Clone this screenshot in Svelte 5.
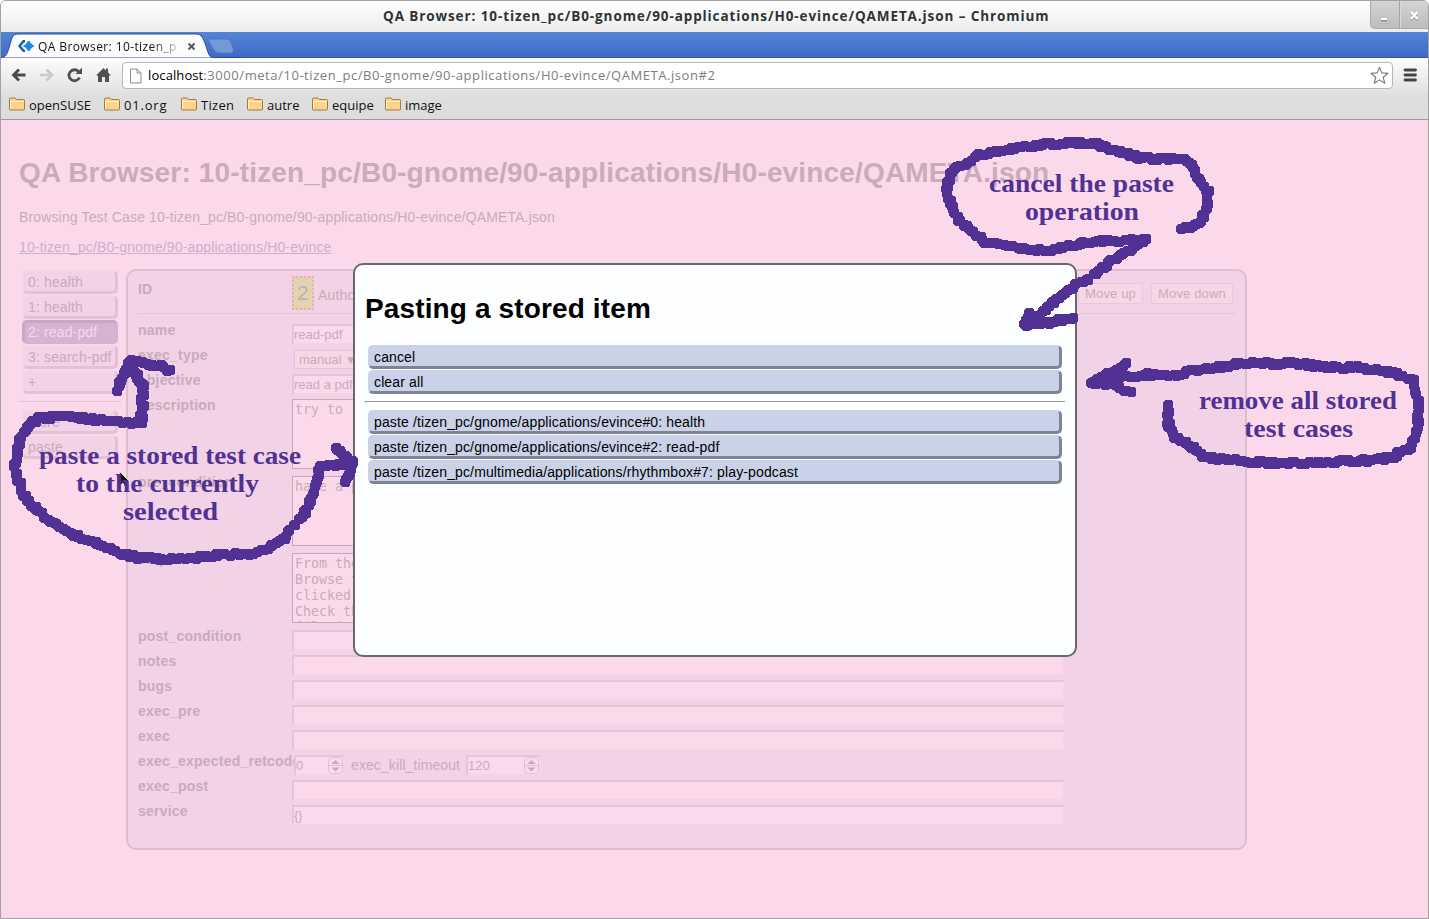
<script>
  const path = '10-tizen_pc/B0-gnome/90-applications/H0-evince';
  const bookmarks = [
    ['openSUSE', 95, 0], ['01.org', 77, 0.8], ['Tizen', 66, 0.3], ['autre', 65, 0], ['equipe', 73, 0], ['image', 70, 0]
  ];
  const tests = ['0: health', '1: health', '2: read-pdf', '3: search-pdf', '+'];
  const textareas = [
    ['description', 'try to'],
    ['pre_condition', 'have a pdf file'],
    ['steps', 'From the file browser\nBrowse to a pdf file\nclicked on the file\nCheck that the pdf\nfile is opened']
  ];
  const plain = ['post_condition', 'notes', 'bugs', 'exec_pre', 'exec'];
  const stored = [
    'paste /tizen_pc/gnome/applications/evince#0: health',
    'paste /tizen_pc/gnome/applications/evince#2: read-pdf',
    'paste /tizen_pc/multimedia/applications/rhythmbox#7: play-podcast'
  ];

  const strokes = [
    [[119,390],[120,381],[124,372],[131,360],[147,365],[160,366],[170,371]],
    [[131,361],[133,373],[143,387],[142,407],[141,424],[130,424],[115,420],[95,420],[75,417],[62,416],[38,418],[27,427],[20,440],[16,455],[15,465],[18,480],[24,495],[34,508],[50,521],[72,534],[95,543],[115,552],[133,557],[160,559],[188,559],[215,555],[250,555],[270,546],[285,539],[293,526],[305,512],[310,500],[316,480],[322,465],[335,465],[352,462]],
    [[127,370],[139,375]],
    [[335,448],[345,456],[353,462],[348,475],[344,482]],
    [[1180,230],[1195,225],[1203,217],[1207,203],[1207,192],[1198,178],[1192,165],[1183,158],[1160,159],[1137,158],[1120,152],[1100,145],[1073,143],[1043,145],[1010,148],[980,155],[960,165],[950,175],[947,190],[952,208],[963,225],[985,242],[1017,247],[1037,251],[1060,249],[1080,243],[1110,241],[1145,240],[1123,254],[1103,267],[1087,280],[1070,288],[1053,302],[1037,317],[1027,325],[1028,314]],
    [[1025,323],[1036,323],[1048,323],[1074,317]],
    [[1125,362],[1117,370],[1092,383],[1107,383],[1117,387],[1130,392]],
    [[1094,383],[1117,377],[1147,375],[1173,376],[1197,369],[1220,367],[1237,364],[1290,363],[1327,367],[1360,368],[1393,372],[1413,382],[1419,400],[1417,430],[1410,447],[1393,457],[1360,461],[1317,463],[1270,463],[1227,460],[1203,457],[1193,447],[1175,437],[1168,423],[1167,405]]
  ];

  // Stamps a slightly wobbling octagonal nib along each stroke.
  let seed = 7;
  const rnd = () => (seed = (seed * 16807) % 2147483647) / 2147483647 - 0.5;
  function brush(points) {
    let d = '';
    for (let i = 1; i < points.length; i++) {
      const [x0, y0] = points[i - 1];
      const [x1, y1] = points[i];
      const n = Math.max(1, Math.round(Math.hypot(x1 - x0, y1 - y0) / 3.5));
      for (let k = 0; k <= n; k++) {
        const x = Math.round(x0 + ((x1 - x0) * k) / n + rnd() * 3.2);
        const y = Math.round(y0 + ((y1 - y0) * k) / n + rnd() * 3.2);
        d += `M${x - 3} ${y - 5}h6l2 2v6l-2 2h-6l-2 -2v-6z`;
      }
    }
    return d;
  }
  const ink = strokes.map(brush).join('');
</script>

<div class="window">
  <header class="titlebar">
    <span class="wtitle">QA Browser: {path}/QAMETA.json – Chromium</span>
    <div class="wbtns">
      <svg width="59" height="28" viewBox="0 0 59 28">
        <path d="M28.500 0V27" stroke="#a5a5a5" /><path d="M29.500 0V27" stroke="#d8d8d8" />
        <path d="M10 19.500h6" stroke="#8b8b8b" stroke-width="2" /><path d="M10 18h6" stroke="#fff" stroke-width="2" />
        <path d="M40 12l6.500 7M46.500 12l-6.500 7" stroke="#8b8b8b" stroke-width="2.400" /><path d="M40 11l6.500 7M46.500 11l-6.500 7" stroke="#fff" stroke-width="2.400" />
      </svg>
    </div>
  </header>
  <div class="tabstrip">
    <svg class="tabshape" width="240" height="26" viewBox="0 0 240 26">
      <path d="M0 26C5 25 6 22 8 16C11 6 11 2 17 2H195C201 2 202 6 205 14C207 21 208 25 212 26Z" fill="#fcfcfc" stroke="#2f4f94" />
      <path d="M0 25.500H1M211 25.500H240" stroke="#2f4f94" />
      <path d="M209 7H226Q229 7 230 10L232.500 18Q233 21 230 21H218Q214 21 213 18L208 10Q207 7 209 7Z" fill="#7499d9" stroke="#5277c0" />
    </svg>
    <div class="tab">
      <svg width="17" height="12" viewBox="0 0 17 12"><path d="M7 1.200H5.500L1.500 6L5.500 10.800H7" fill="none" stroke="#145a9c" stroke-width="2.300" /><path d="M4.500 6L7.500 4.500L10 1H11.500L13 3.500L16.500 6L13 8.500L11.500 11H10L7.500 7.500Z" fill="#1a8ae6" /></svg>
      <span class="tabtext">QA Browser: 10-tizen_p</span>
      <svg class="close" width="9" height="9" viewBox="0 0 9 9"><path d="M1.500 1.500l6 6M7.500 1.500l-6 6" stroke="#555" stroke-width="1.900" /></svg>
    </div>
  </div>
  <div class="chrome">
    <div class="toolbar">
      <svg class="nav" width="104" height="20" viewBox="0 0 104 20" fill="none">
        <path d="M15.500 10H3M9 4.500L3.500 10L9 15.500" stroke="#4b4b4b" stroke-width="2.800" />
        <path d="M30 10H42M36.500 4.500L42 10L36.500 15.500" stroke="#c9c9c9" stroke-width="2.600" />
        <path d="M68.500 6.500A5.500 5.500 0 1 0 69.500 12.500" stroke="#505050" stroke-width="2.800" /><path d="M72 2.500V9H65.500Z" fill="#505050" />
        <path d="M86 10.500L93.500 3L96 5.500V3.500H98V7.500L101 10.500H99V17H95V12H92V17H88V10.500Z" fill="#505050" />
      </svg>
      <div class="omni">
        <svg width="13" height="16" viewBox="0 0 13 16"><path d="M1.500 1H8L12 5V15H1.500ZM8 1V5H12" fill="#fafafa" stroke="#8c8c8c" /></svg>
        <span class="url"><b>localhost</b>:3000/meta/{path}/QAMETA.json#2</span>
        <svg class="star" width="19" height="19" viewBox="0 0 19 19"><path d="M9.500 1.200L11.800 6.900L18 7.300L13.200 11.200L14.800 17.300L9.500 13.900L4.200 17.300L5.800 11.200L1 7.300L7.200 6.900Z" fill="#fff" stroke="#777" stroke-width="1.100" stroke-linejoin="round" /></svg>
      </div>
      <svg class="burger" width="14" height="14" viewBox="0 0 14 14"><path d="M2 2H12.500M2 7H12.500M2 12H12.500" stroke="#444" stroke-width="2.800" stroke-linecap="round" /></svg>
    </div>
    <nav class="bookmarks">
      {#each bookmarks as [name, w, ls]}
        <span class="bm" style="width:{w}px;letter-spacing:{ls}px">
          <svg width="16" height="14" viewBox="0 0 16 14"><path d="M.5 12V2Q.5 1 1.500 1H6L7.500 2.500H14.500Q15.500 2.500 15.500 3.500V12Q15.500 13 14.500 13H1.500Q.5 13 .5 12Z" fill="#fbd48c" stroke="#a57a45" /><path d="M1.500 4.500H14.500M1.500 3.500V12" stroke="#fff0cc" /></svg>{name}
        </span>
      {/each}
    </nav>
  </div>

  <main class="page">
    <h1>QA Browser: {path}/QAMETA.json</h1>
    <p>Browsing Test Case {path}/QAMETA.json</p>
    <p class="link"><span>{path}</span></p>
    <div class="cols">
      <aside>
        {#each tests as t, i}<div class="sbtn" class:sel={i === 2}>{t}</div>{/each}
        <hr />
        <div class="sbtn">store</div>
        <div class="sbtn">paste</div>
      </aside>
      <section class="panel">
        <div class="idrow">
          <span class="label">ID</span>
          <span class="num">2</span><span class="author">Author</span>
          <span class="btn up">Move up</span><span class="btn">Move down</span>
        </div>
        <div class="row"><span class="label">name</span><div class="field">read-pdf</div></div>
        <div class="row"><span class="label">exec_type</span><div class="select">manual <i>▼</i></div></div>
        <div class="row"><span class="label">objective</span><div class="field">read a pdf</div></div>
        {#each textareas as [name, value]}
          <div class="row tall"><span class="label">{name}</span><div class="area">{value}</div></div>
        {/each}
        {#each plain as name}
          <div class="row"><span class="label">{name}</span><div class="field"></div></div>
        {/each}
        <div class="row">
          <span class="label">exec_expected_retcode</span>
          {#each [['0', 51], ['120', 75]] as [v, w], i}
            {#if i}<span class="kill">exec_kill_timeout</span>{/if}
            <div class="field spin" class:first={!i} style="width:{w}px">{v}
              <svg width="15" height="17" viewBox="0 0 15 17"><rect x=".5" y=".5" width="14" height="16" rx="3" fill="none" stroke="#e3bfd0" /><path d="M.5 8.500h14" stroke="#e3bfd0" /><path d="M3.500 7L7.500 3L11.500 7ZM3.500 10.500L7.500 14.500L11.500 10.500Z" fill="#c9a8ba" /></svg>
            </div>
          {/each}
        </div>
        <div class="row"><span class="label">exec_post</span><div class="field"></div></div>
        <div class="row"><span class="label">service</span><div class="field">{'{}'}</div></div>
      </section>
    </div>
  </main>

  <div class="modal">
    <h2>Pasting a stored item</h2>
    <div class="mbtn">cancel</div>
    <div class="mbtn">clear all</div>
    <hr />
    {#each stored as s}<div class="mbtn">{s}</div>{/each}
  </div>

  <svg class="ink" width="1429" height="919" viewBox="0 0 1429 919">
    <path d="M119.500 471.500V486L123 483L125.500 488.500L128 487.500L125.500 482H130Z" fill="#111" stroke="#fff" stroke-width=".7" />
    <path d={ink} fill="#513193" shape-rendering="crispEdges" />
    <g class="notes">
      <text x="39" y="464" textLength="262" lengthAdjust="spacingAndGlyphs">paste a stored test case</text>
      <text x="76" y="492" textLength="183" lengthAdjust="spacingAndGlyphs">to the currently</text>
      <text x="123" y="520" textLength="95" lengthAdjust="spacingAndGlyphs">selected</text>
      <text x="989" y="192" textLength="185" lengthAdjust="spacingAndGlyphs">cancel the paste</text>
      <text x="1025" y="220" textLength="114" lengthAdjust="spacingAndGlyphs">operation</text>
      <text x="1199" y="409" textLength="198" lengthAdjust="spacingAndGlyphs">remove all stored</text>
      <text x="1244" y="437" textLength="109" lengthAdjust="spacingAndGlyphs">test cases</text>
    </g>
  </svg>
</div>

<style>
  :global(body) { background: #fff; overflow: hidden; }
  .window, .window * { box-sizing: border-box; }
  .window { position: relative; width: 1429px; height: 919px; border: 1px solid #a2a2a2; border-radius: 6px 6px 0 0; overflow: hidden; background: #fbd9ea; font-family: "Liberation Sans", Arial, sans-serif; display: flex; flex-direction: column; }
  .titlebar { height: 31px; flex: none; background: linear-gradient(#fff, #ececec); display: flex; justify-content: flex-end; font: bold 13.500px "Open Sans", sans-serif; color: #2e3436; }
  .wtitle { flex: 1; padding-left: 382px; line-height: 30px; white-space: nowrap; letter-spacing: 0.9px; }
  .wbtns { width: 58px; height: 28px; background: linear-gradient(#d5d5d5, #bcbcbc); border: 1px solid #aaa; border-width: 0 0 1px 1px; border-radius: 0 0 0 5px; }
  .wbtns svg { display: block; }
  .tabstrip { height: 26px; flex: none; background: linear-gradient(#5584d5, #3e6ac6); border-bottom: 1px solid #3456a0; position: relative; }
  .tabshape { position: absolute; left: 0; top: 0; }
  .tab { position: relative; display: flex; align-items: center; height: 28px; padding-left: 17px; font: 12px "Open Sans", sans-serif; color: #111; }
  .tabtext { margin-left: 3px; width: 140px; white-space: nowrap; overflow: hidden; letter-spacing: .4px; background: linear-gradient(90deg, #111 80%, #ccc 100%); background-clip: text; color: transparent; }
  .close { margin-left: 9px; margin-top: 1px; }
  .chrome { height: 62px; flex: none; background: linear-gradient(#fcfcfc, #dedede 65%, #dcdcdc); border-bottom: 1px solid #9c9c9c; }
  .toolbar { display: flex; height: 32px; padding-top: 4px; }
  .nav { margin: 3px 0 0 9px; }
  .omni { margin-left: 8px; width: 1271px; height: 27px; background: #fff; border: 1px solid #b5b5b5; border-radius: 4px; display: flex; align-items: center; padding-left: 6px; }
  .url { margin: -2px 0 0 6px; flex: 1; font: 13px "Open Sans", sans-serif; letter-spacing: .56px; color: #7d7d7d; white-space: nowrap; }
  .url b { font-weight: normal; color: #000; letter-spacing: .1px; }
  .star { margin-right: 3px; }
  .burger { margin: 6px 0 0 10px; }
  .bookmarks { display: flex; padding: 5px 0 0 8px; font: 13px "Open Sans", sans-serif; color: #111; }
  .bm { display: flex; align-items: center; height: 20px; gap: 4px; white-space: nowrap; }
  .bm svg { margin-top: -2px; }
  .page { flex: 1; padding: 37px 18px 0; color: #c9abb9; font-size: 14px; letter-spacing: .145px; }
  h1 { margin: 0; font-size: 28px; line-height: 32px; letter-spacing: .16px; white-space: nowrap; }
  p { margin: 20px 0 0; line-height: 16px; }
  p.link { margin-top: 14px; color: #c9b0cf; text-decoration: underline; }
  .cols { display: flex; gap: 5px; margin-top: 14px; align-items: flex-start; }
  aside { width: 102px; }
  .sbtn { height: 24px; margin: 1px 3px 0; padding-left: 4px; background: #f1d2e6; border: 2px solid #f3d5e6; border-right: 3px solid #e3c0d2; border-bottom: 3px solid #e3c0d2; border-radius: 5px; line-height: 20px; white-space: nowrap; }
  .sbtn.sel { background: #d5b4d3; border: 3px solid #c9a7c0; border-right: 2px solid #d3b2d2; border-bottom: 2px solid #d3b2d2; padding-left: 3px; line-height: 18px; color: #f7d8ea; }
  aside hr { border: 0; border-top: 1px solid #e3bfd0; height: 1px; margin: 7px 0 8px; }
  .panel { width: 1121px; height: 581px; border: 2px solid #dfbccf; border-radius: 10px; background: #f1d2e6; padding: 5px 10px; }
  .idrow { display: flex; height: 38px; border-bottom: 1px solid #e6c3d5; margin-bottom: 8px; align-items: flex-start; }
  .label { width: 154px; flex: none; font-weight: bold; line-height: 16px; white-space: nowrap; letter-spacing: .22px; }
  .idrow .label { margin-top: 5px; }
  .num { width: 22px; height: 34px; background: #e0d4b3; border: 2px dotted #ffa5b6; font-size: 21px; line-height: 30px; text-align: center; }
  .author { margin: 11px 0 0 4px; flex: 1; line-height: 16px; }
  .btn { width: 82px; height: 21px; margin: 7px 2px 0 0; border: 1px solid #ebc8d9; background: #f8d6e7; font-size: 13px; line-height: 19px; text-align: center; border-radius: 2px; }
  .btn.up { width: 65px; margin-right: 8px; }
  .row { display: flex; height: 25px; }
  .row.tall { height: 77px; }
  .field { width: 773px; height: 21px; margin-top: 2px; border: 2px solid #e7c4d5; border-right-color: #f5d3e4; border-bottom-color: #f5d3e4; background: #fbd9ea; font-size: 13px; line-height: 18px; letter-spacing: 0; position: relative; }
  .select { margin: 3px 0 0 2px; width: 68px; height: 19px; border: 1px solid #e7c4d5; background: #f8d6e7; font-size: 13px; line-height: 18px; letter-spacing: 0; padding-left: 4px; white-space: nowrap; }
  .select i { font: 9px "DejaVu Sans", sans-serif; vertical-align: 1px; margin-left: 2px; }
  .area { width: 772px; height: 70px; margin-top: 2px; border: 1px solid #c9a5b6; background: #fbd9ea; padding: 2px; font: 13.300px/16px "DejaVu Sans Mono", monospace; letter-spacing: 0; white-space: pre; overflow: hidden; }
  .spin svg { position: absolute; right: 0; top: 0; }
  .spin.first { margin-left: 2px; }
  .kill { margin: 4px 6px 0 6px; line-height: 16px; letter-spacing: .1px; }
  .modal { position: absolute; left: 352px; top: 262px; width: 724px; height: 394px; border: 2px solid #666a6c; border-radius: 10px; background: #fdfeff; padding: 28px 10px; font-size: 14px; letter-spacing: .13px; color: #000; }
  h2 { margin: 0 0 20px; font-size: 28px; line-height: 32px; }
  .mbtn { height: 24px; margin: 0 3px 1px; padding-left: 4px; background: #cad2e7; border: 2px solid #cad2e7; border-right: 3px solid #7f8494; border-bottom: 3px solid #7f8494; border-radius: 5px; line-height: 20px; }
  .modal hr { border: 0; border-top: 1px solid #999; border-left: 1px solid #999; height: 2px; margin: 7px 0 7px; }
  .ink { position: absolute; left: -1px; top: -1px; pointer-events: none; }
  .notes { font: bold 25px "Liberation Serif", serif; fill: #513193; }
</style>
